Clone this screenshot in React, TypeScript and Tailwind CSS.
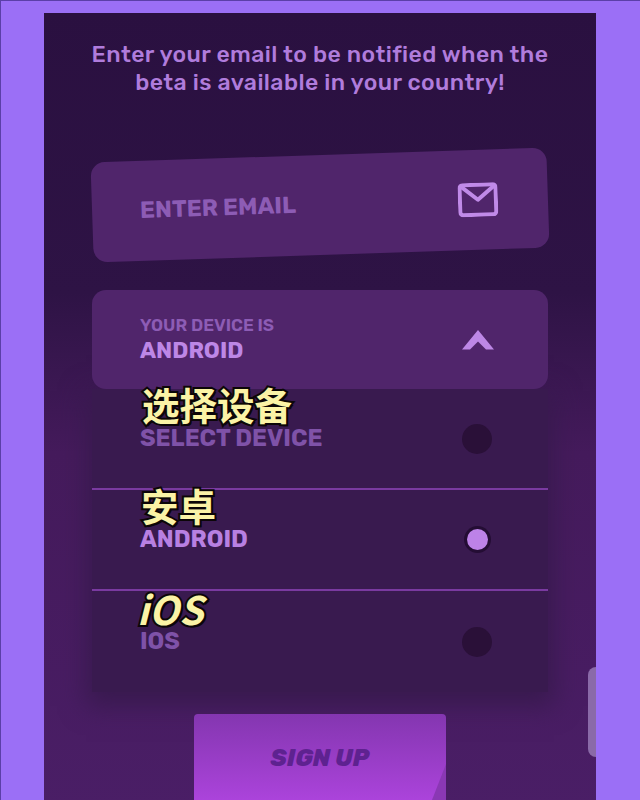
export default function App() {
  const rows = [
    { caption: "选择设备", label: "SELECT DEVICE", selected: false, captionClass: "left-[50px] top-[-7px] text-[37.5px]" },
    { caption: "安卓", label: "ANDROID", selected: true, captionClass: "left-[49px] top-[-7px] text-[37.5px]" },
    { caption: "iOS", label: "IOS", selected: false, captionClass: "left-[45px] top-[-5px] text-[39px] italic font-semibold" },
  ];
  return (
    <div className="relative h-[800px] w-[640px] overflow-hidden border-t border-l border-[#5b3fa8] bg-[#9b6ff6] pl-[43px] pr-[44px] pt-3 font-['Rubik','Roboto','Liberation_Sans',sans-serif]">
      <div className="relative flex h-[800px] w-[552px] flex-col items-center overflow-hidden bg-[linear-gradient(to_bottom,#2a1040_0%,#2e1345_35%,#451b5c_55%,#4a1e66_100%)] pt-[27px]">
        <p className="shrink-0 text-center text-[23px] font-medium leading-[28px] tracking-[0.4px] text-[#b07cdc]">
          Enter your email to be notified when the
          <br />
          beta is available in your country!
        </p>
        <div className="mt-[59px] flex h-[100px] w-[456px] shrink-0 -rotate-[1.9deg] items-center justify-between rounded-[14px] bg-[#50256b] pl-[48px] pr-[50px]">
          <span className="text-[23.5px] font-bold text-[#8d5cb5]">ENTER EMAIL</span>
          <svg viewBox="0 0 40 34" className="h-[34px] w-[40px]" fill="none" stroke="#c08ae8" strokeWidth="4" strokeLinejoin="round">
            <rect x="2" y="2" width="36" height="30" rx="3" />
            <path d="M3 3 L20 17 L37 3" />
          </svg>
        </div>
        <div className="relative mt-[35px] w-[456px] shrink-0">
          <div className="relative z-10 flex h-[99px] items-center justify-between rounded-[14px] bg-[#50256b] pl-[48px] pr-[54px]">
            <div className="flex flex-col">
              <span className="text-[17.2px] font-semibold leading-[22px] text-[#8d5cb5]">YOUR DEVICE IS</span>
              <span className="text-[22.5px] font-bold leading-[30px] text-[#bd87e6]">ANDROID</span>
            </div>
            <svg viewBox="0 0 32 20" className="h-[20px] w-[32px]" fill="#bd87e6">
              <path d="M16 0 L32 19.5 H24 L16 11.5 L8 19.5 H0 Z" />
            </svg>
          </div>
          <div className="bg-[#391a4f] shadow-[0_8px_24px_6px_#391a4f]">
            {rows.map((row, i) => (
              <div
                key={row.label}
                className={`relative z-10 flex h-[101px] items-center justify-between pl-[48px] pr-[56px] ${i < 2 ? "border-b-2 border-[#7a3aa0]" : ""}`}
              >
                <span className={`text-[23.5px] font-bold ${row.selected ? "text-[#b880e2]" : "text-[#7f52a8]"}`}>{row.label}</span>
                <span className="flex h-[30px] w-[30px] items-center justify-center">
                  {row.selected ? (
                    <span className="flex h-[27px] w-[27px] items-center justify-center rounded-full bg-[#240d34]">
                      <span className="h-[21px] w-[21px] rounded-full bg-[#bd82e8]" />
                    </span>
                  ) : (
                    <span className="h-[30px] w-[30px] rounded-full bg-[#2a1038]" />
                  )}
                </span>
                <span
                  className={`absolute font-['Noto_Sans_CJK_SC',sans-serif] font-bold leading-[44px] text-[#fbf3a6] [paint-order:stroke_fill] [-webkit-text-stroke:4px_#0c0608] [text-shadow:2px_2px_0_#0c0608] ${row.captionClass}`}
                >
                  {row.caption}
                </span>
              </div>
            ))}
          </div>
        </div>
        <div className="relative z-10 mt-[22px] flex h-[90px] w-[252px] shrink-0 justify-center overflow-hidden rounded-t-[4px] bg-gradient-to-b from-[#8436b0] to-[#ad44dd] pt-[28px]">
          <span className="text-[24px] font-extrabold italic leading-[32px] text-[#5e2290]">SIGN UP</span>
          <div className="absolute right-0 top-[50px] h-[36px] w-[14px] bg-[#8a38b4] [clip-path:polygon(100%_0,100%_100%,0_100%)]" />
        </div>
        <div className="absolute right-0 top-[654px] z-10 h-[90px] w-[8px] rounded-l-[8px] bg-[#8a6aa8]" />
      </div>
    </div>
  );
}
